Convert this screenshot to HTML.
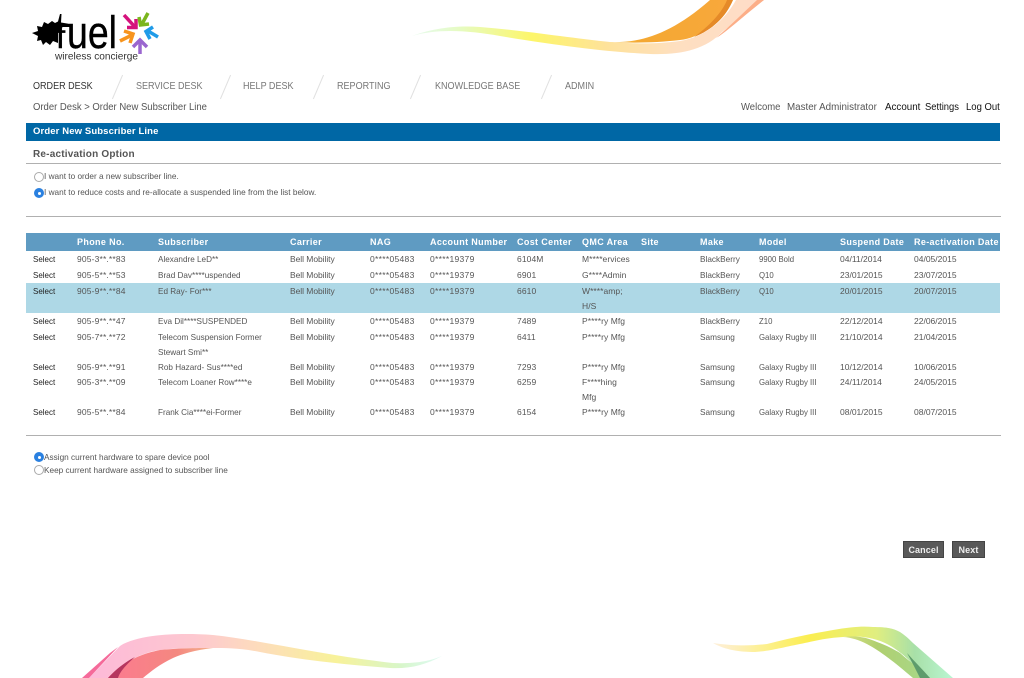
<!DOCTYPE html>
<html><head><meta charset="utf-8"><style>
html,body{margin:0;padding:0;background:#fff}
body{width:1024px;height:678px;position:relative;overflow:hidden;font-family:"Liberation Sans",sans-serif;color:#555}
.t{position:absolute;white-space:nowrap;font-size:8.5px;line-height:12px;height:12px;color:#555;transform-origin:0 50%;transform:scaleX(.97)}
.h{font-weight:bold;color:#fff;font-size:9px;letter-spacing:.35px;top:236px;transform:none}
.n{font-size:10.5px;color:#777;line-height:14px;height:14px;top:79px;transform:scaleX(.86)}
.u{font-size:10px;color:#555;line-height:14px;height:14px;top:101px;transform:scaleX(.95)}
.b{position:absolute}
.sl{position:absolute;width:1px;height:26px;background:#e0e0e0;transform:rotate(23deg);top:74px}
.r{position:absolute;width:10px;height:10px;border-radius:50%;box-sizing:border-box;border:1px solid #aaa;background:#fff}
.r.on{background:#2a80e0;border:none}
.r.on:after{content:"";position:absolute;left:3.5px;top:3.5px;width:3px;height:3px;border-radius:50%;background:#fff}
.btn{position:absolute;background:#595959;color:#eee;font-weight:bold;font-size:9px;letter-spacing:.1px;text-align:center;height:17px;line-height:16px;border:1px solid #444;box-sizing:border-box}
.w{position:absolute;left:0;width:1024px;height:0}
.w span{position:absolute;top:0;white-space:nowrap;font-size:8.5px;line-height:12px;color:#555;transform-origin:0 50%}
.w .c1{left:32.5px;color:#222;transform:scaleX(.94)}
.w .c2{left:77px;letter-spacing:.15px}
.w .c3{left:158px;transform:scaleX(.96)}
.w .c4{left:290px;letter-spacing:-.05px}
.w .c5{left:370px;letter-spacing:.3px}
.w .c6{left:430px;letter-spacing:.3px}
.w .c7{left:517px;letter-spacing:.1px}
.w .c8{left:582px;letter-spacing:.05px}
.w .c9{left:700px;transform:scaleX(.97)}
.w .c10{left:759px;transform:scaleX(.915)}
.w .c11{left:840px}
.w .c12{left:914px}
</style></head><body>

<svg class="b" style="left:0;top:0" width="1024" height="678" viewBox="0 0 1024 678">
<defs>
<linearGradient id="a" x1="412" x2="765" y1="0" y2="0" gradientUnits="userSpaceOnUse"><stop offset="0" stop-color="#d8f8e0" stop-opacity=".6"/><stop offset=".14" stop-color="#e6fbc0"/><stop offset=".34" stop-color="#fdf66a"/><stop offset=".55" stop-color="#fee29a"/><stop offset=".75" stop-color="#fedfc0"/><stop offset="1" stop-color="#fedcc8"/></linearGradient>
<linearGradient id="b" x1="600" x2="730" y1="0" y2="0" gradientUnits="userSpaceOnUse"><stop offset="0" stop-color="#fcd860"/><stop offset=".3" stop-color="#f4a832"/><stop offset="1" stop-color="#f8a83c"/></linearGradient>
<linearGradient id="c" x1="89" x2="442" y1="0" y2="0" gradientUnits="userSpaceOnUse"><stop offset="0" stop-color="#fdb9d8"/><stop offset=".3" stop-color="#fdc8d0"/><stop offset=".48" stop-color="#fddcbc"/><stop offset=".7" stop-color="#f8f29a"/><stop offset=".88" stop-color="#d8f6c8"/><stop offset="1" stop-color="#d0f8ec" stop-opacity=".7"/></linearGradient>
<linearGradient id="d" x1="108" x2="215" y1="0" y2="0" gradientUnits="userSpaceOnUse"><stop offset="0" stop-color="#fc7a90"/><stop offset=".65" stop-color="#f48880"/><stop offset="1" stop-color="#f4b890"/></linearGradient>
<linearGradient id="e" x1="713" x2="953" y1="0" y2="0" gradientUnits="userSpaceOnUse"><stop offset="0" stop-color="#fde8c8" stop-opacity=".7"/><stop offset=".18" stop-color="#fdf09a"/><stop offset=".4" stop-color="#fbee50"/><stop offset=".68" stop-color="#e0ee80"/><stop offset=".84" stop-color="#a8e0a8"/><stop offset="1" stop-color="#baf6d2"/></linearGradient>
<linearGradient id="f" x1="845" x2="925" y1="0" y2="0" gradientUnits="userSpaceOnUse"><stop offset="0" stop-color="#d8e080"/><stop offset=".4" stop-color="#b0cf70"/><stop offset="1" stop-color="#a8d888"/></linearGradient>
</defs>

<!-- top wave -->
<path d="M412 36C430 29 455 25 480 27C520 30 570 38 610 42C640 44 655 44 680 41C705 37 725 20 736 0L764 0L722 32C705 50 680 55 650 54C610 52 560 46 500 36C470 31 440 28 412 36Z" fill="url(#a)"/>
<path d="M610 42C640 43 670 35 710 0L733 0C722 22 700 38 680 40C655 43 630 43 610 42Z" fill="url(#b)"/>
<path d="M727 0L733 0C726 17 712 30 694 37C708 27 722 13 727 0Z" fill="#e58a28"/>
<path d="M764 0L757 0C743 13 730 26 716 38C724 34 745 15 764 0Z" fill="#fcae88"/>

<!-- bottom left wave -->
<path d="M89 678L120 646C135 636 170 632 213 635C260 640 320 655 393 663C415 664 430 661 442 656C425 665 410 669 390 668C350 665 300 660 260 652C240 648 225 648 213 648C190 648 165 648 150 652C130 658 118 668 108 678Z" fill="url(#c)"/>
<path d="M82 678L110 653L118 647L89 678Z" fill="#f56a9a"/>
<path d="M108 678C120 665 135 655 160 650C180 648 200 648 213 648C195 650 182 654 173 658C160 664 150 672 143 678Z" fill="url(#d)"/>
<path d="M108 678C115 670 125 662 135 657C127 664 120 671 118 678Z" fill="#b5365f"/>

<!-- bottom right wave -->
<path d="M713 643C735 646 750 646 767 644C790 638 810 634 833 630C850 627 862 626 873 627C885 627 893 628 900 632C906 636 910 640 913 643L953 678L925 678C915 665 900 650 885 643C870 636 855 636 843 637C825 638 815 641 800 644C780 648 770 651 755 652C740 652 725 650 713 643Z" fill="url(#e)"/>
<path d="M843 637C858 635 868 638 877 642C886 645 895 650 900 653C910 662 922 670 930 678L913 678L907 673C900 667 895 663 887 657C875 648 860 638 843 637Z" fill="url(#f)"/>
<path d="M907 653C915 662 923 670 930 678L920 678C916 670 912 662 907 653Z" fill="#5e9c6c"/>

<!-- logo splat -->
<path d="M32 33L38 31L37 26L42 27L44 22L48 24L52 21L55 23L58 21.500L60 14L61.500 14L61 22.500L70 24L70 27L62 27L58 32L58 43L53 41L50 45L46 42L43 45L41 40L37 41L38 36Z" fill="#000"/>
<text x="56" y="48" font-family="Liberation Sans" font-size="33" fill="#000" stroke="#000" stroke-width=".4">f</text>
<text x="67" y="48" font-family="Liberation Sans" font-size="45" textLength="50" lengthAdjust="spacingAndGlyphs" fill="#000" stroke="#000" stroke-width=".4">uel</text>
<text x="55" y="59.500" font-family="Liberation Sans" font-size="10" textLength="83" lengthAdjust="spacingAndGlyphs" fill="#333">wireless concierge</text>

<!-- logo arrows -->
<g fill="none" stroke-width="3.500">
<g stroke="#d5127c"><path d="M124 15L135 27"/><path d="M136 19L136 27.500L127 27.500"/></g>
<g stroke="#7ab51d"><path d="M148 13L142 24"/><path d="M139 17L140.500 25L149 24"/></g>
<g stroke="#1f9be8"><path d="M158 37L148 31"/><path d="M153 27L146 31.500L150 39"/></g>
<g stroke="#9a66cf"><path d="M140 54L140 41"/><path d="M133 47L140 40L147 47"/></g>
<g stroke="#f7941d"><path d="M120 41L132 35"/><path d="M124 31L133 34L130 43"/></g>
</g>
</svg>

<div class="t n" style="left:33px;color:#333">ORDER DESK</div>
<div class="sl" style="left:117px"></div>
<div class="t n" style="left:136px">SERVICE DESK</div>
<div class="sl" style="left:225px"></div>
<div class="t n" style="left:243px">HELP DESK</div>
<div class="sl" style="left:318px"></div>
<div class="t n" style="left:337px">REPORTING</div>
<div class="sl" style="left:415px"></div>
<div class="t n" style="left:435px">KNOWLEDGE BASE</div>
<div class="sl" style="left:546px"></div>
<div class="t n" style="left:565px">ADMIN</div>

<div class="t u" style="left:33px">Order Desk &gt; Order New Subscriber Line</div>
<div class="t u" style="left:741px">Welcome</div>
<div class="t u" style="left:787px;transform:scaleX(.98)">Master Administrator</div>
<div class="t u" style="left:885px;color:#111;transform:scaleX(.98)">Account</div>
<div class="t u" style="left:925px;color:#111;transform:scaleX(.94)">Settings</div>
<div class="t u" style="left:966px;color:#111;transform:scaleX(.95)">Log Out</div>

<div class="b" style="left:26px;top:123px;width:974px;height:18px;background:#0067a5"></div>
<div class="t" style="left:33px;top:126px;color:#fff;font-weight:bold;font-size:9.500px;letter-spacing:.12px;transform:none">Order New Subscriber Line</div>
<div class="t" style="left:33px;top:149px;color:#555;font-weight:bold;font-size:10px;letter-spacing:.2px;transform:none">Re-activation Option</div>
<div class="b" style="left:26px;top:163px;width:975px;height:1px;background:#b0b0b0"></div>

<div class="r" style="left:34px;top:172px"></div>
<div class="t" style="left:44px;top:170px">I want to order a new subscriber line.</div>
<div class="r on" style="left:34px;top:188px"></div>
<div class="t" style="left:44px;top:186px">I want to reduce costs and re-allocate a suspended line from the list below.</div>
<div class="b" style="left:26px;top:216px;width:975px;height:1px;background:#b0b0b0"></div>

<div class="b" style="left:26px;top:233px;width:974px;height:18px;background:#5f9bc2"></div>
<div class="b" style="left:26px;top:283px;width:974px;height:30px;background:#aed8e6"></div>

<div class="t h" style="left:77px">Phone No.</div>
<div class="t h" style="left:158px">Subscriber</div>
<div class="t h" style="left:290px">Carrier</div>
<div class="t h" style="left:370px">NAG</div>
<div class="t h" style="left:430px">Account Number</div>
<div class="t h" style="left:517px">Cost Center</div>
<div class="t h" style="left:582px">QMC Area</div>
<div class="t h" style="left:641px">Site</div>
<div class="t h" style="left:700px">Make</div>
<div class="t h" style="left:759px">Model</div>
<div class="t h" style="left:840px">Suspend Date</div>
<div class="t h" style="left:914px">Re-activation Date</div>

<div class="w" style="top:253px"><span class="c1">Select</span><span class="c2">905-3**.**83</span><span class="c3">Alexandre LeD**</span><span class="c4">Bell Mobility</span><span class="c5">0****05483</span><span class="c6">0****19379</span><span class="c7">6104M</span><span class="c8">M****ervices</span><span class="c9">BlackBerry</span><span class="c10">9900 Bold</span><span class="c11">04/11/2014</span><span class="c12">04/05/2015</span></div>
<div class="w" style="top:269px"><span class="c1">Select</span><span class="c2">905-5**.**53</span><span class="c3">Brad Dav****uspended</span><span class="c4">Bell Mobility</span><span class="c5">0****05483</span><span class="c6">0****19379</span><span class="c7">6901</span><span class="c8">G****Admin</span><span class="c9">BlackBerry</span><span class="c10">Q10</span><span class="c11">23/01/2015</span><span class="c12">23/07/2015</span></div>
<div class="w" style="top:285px"><span class="c1">Select</span><span class="c2">905-9**.**84</span><span class="c3">Ed Ray- For***</span><span class="c4">Bell Mobility</span><span class="c5">0****05483</span><span class="c6">0****19379</span><span class="c7">6610</span><span class="c8">W****amp;</span><span class="c8" style="top:15px">H/S</span><span class="c9">BlackBerry</span><span class="c10">Q10</span><span class="c11">20/01/2015</span><span class="c12">20/07/2015</span></div>
<div class="w" style="top:315px"><span class="c1">Select</span><span class="c2">905-9**.**47</span><span class="c3">Eva Dil****SUSPENDED</span><span class="c4">Bell Mobility</span><span class="c5">0****05483</span><span class="c6">0****19379</span><span class="c7">7489</span><span class="c8">P****ry Mfg</span><span class="c9">BlackBerry</span><span class="c10">Z10</span><span class="c11">22/12/2014</span><span class="c12">22/06/2015</span></div>
<div class="w" style="top:331px"><span class="c1">Select</span><span class="c2">905-7**.**72</span><span class="c3">Telecom Suspension Former</span><span class="c3" style="top:15px">Stewart Smi**</span><span class="c4">Bell Mobility</span><span class="c5">0****05483</span><span class="c6">0****19379</span><span class="c7">6411</span><span class="c8">P****ry Mfg</span><span class="c9">Samsung</span><span class="c10">Galaxy Rugby III</span><span class="c11">21/10/2014</span><span class="c12">21/04/2015</span></div>
<div class="w" style="top:361px"><span class="c1">Select</span><span class="c2">905-9**.**91</span><span class="c3">Rob Hazard- Sus****ed</span><span class="c4">Bell Mobility</span><span class="c5">0****05483</span><span class="c6">0****19379</span><span class="c7">7293</span><span class="c8">P****ry Mfg</span><span class="c9">Samsung</span><span class="c10">Galaxy Rugby III</span><span class="c11">10/12/2014</span><span class="c12">10/06/2015</span></div>
<div class="w" style="top:376px"><span class="c1">Select</span><span class="c2">905-3**.**09</span><span class="c3">Telecom Loaner Row****e</span><span class="c4">Bell Mobility</span><span class="c5">0****05483</span><span class="c6">0****19379</span><span class="c7">6259</span><span class="c8">F****hing</span><span class="c8" style="top:15px">Mfg</span><span class="c9">Samsung</span><span class="c10">Galaxy Rugby III</span><span class="c11">24/11/2014</span><span class="c12">24/05/2015</span></div>
<div class="w" style="top:406px"><span class="c1">Select</span><span class="c2">905-5**.**84</span><span class="c3">Frank Cia****ei-Former</span><span class="c4">Bell Mobility</span><span class="c5">0****05483</span><span class="c6">0****19379</span><span class="c7">6154</span><span class="c8">P****ry Mfg</span><span class="c9">Samsung</span><span class="c10">Galaxy Rugby III</span><span class="c11">08/01/2015</span><span class="c12">08/07/2015</span></div>

<div class="b" style="left:26px;top:435px;width:975px;height:1px;background:#b0b0b0"></div>

<div class="r on" style="left:34px;top:452px"></div>
<div class="t" style="left:44px;top:451px">Assign current hardware to spare device pool</div>
<div class="r" style="left:34px;top:465px"></div>
<div class="t" style="left:44px;top:464px">Keep current hardware assigned to subscriber line</div>

<div class="btn" style="left:903px;top:541px;width:41px">Cancel</div>
<div class="btn" style="left:952px;top:541px;width:33px">Next</div>
</body></html>
